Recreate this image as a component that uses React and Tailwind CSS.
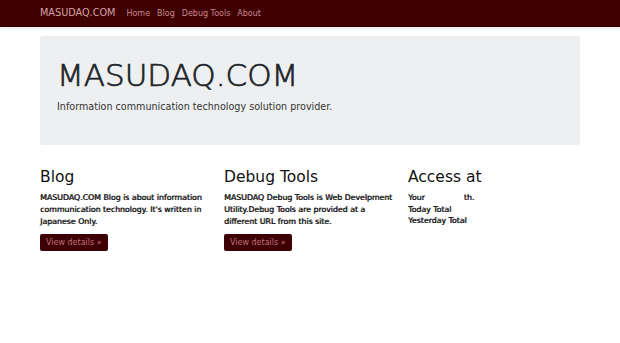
const columns = [
  {
    title: 'Blog',
    body: "MASUDAQ.COM Blog is about information communication technology. It's written in Japanese Only.",
  },
  {
    title: 'Debug Tools',
    body: 'MASUDAQ Debug Tools is Web Develpment Utility.Debug Tools are provided at a different URL from this site.',
  },
]

const App = () => {
  return (
    <div className="min-h-[343px] bg-white font-['DejaVu_Sans',sans-serif] text-[#212529]">
      {/* Navbar */}
      <nav className="h-[27px] bg-[#3f0000] shadow-[0_2px_3px_rgba(180,200,210,0.35)]">
        <div className="mx-auto flex h-full w-[540px] items-center">
          <span className="mr-[11px] text-[9.7px] text-[#d6a3a8]">MASUDAQ.COM</span>
          <ul className="flex items-center gap-[7px] text-[8px] text-[#c98990]">
            <li>Home</li>
            <li>Blog</li>
            <li>Debug Tools</li>
            <li>About</li>
          </ul>
        </div>
      </nav>

      <main className="mx-auto w-[540px] pt-[9px]">
        {/* Jumbotron */}
        <div className="h-[109px] rounded-[3px] bg-[#eeeff1] px-[17px] pt-[20px]">
          <h1 className="text-[31px] font-light leading-[38px] text-[#212529] [-webkit-text-stroke:0.7px_#212529]">MASUDAQ.COM</h1>
          <p className="mt-[6px] text-[9.6px] text-[#333]">Information communication technology solution provider.</p>
        </div>

        {/* Columns */}
        <div className="mt-[22px] grid grid-cols-3 gap-x-[12px]">
          {columns.map((col) => (
            <div key={col.title}>
              <h2 className="text-[15.5px] leading-[20px] text-[#111]">{col.title}</h2>
              <p className="mt-[5px] text-[7.8px] leading-[12px] text-[#1a1a1a] [text-shadow:0.55px_0_0_currentColor]">{col.body}</p>
              <button className="mt-[6px] rounded-[2px] bg-[#3d0004] px-[6px] py-[3px] text-[8px] leading-[11px] text-[#c0707a]">
                View details »
              </button>
            </div>
          ))}
          <div>
            <h2 className="text-[15.5px] leading-[20px] text-[#111]">Access at</h2>
            <div className="mt-[5px] text-[7.8px] leading-[11.5px] text-[#1a1a1a] [text-shadow:0.55px_0_0_currentColor]">
              <p>
                Your<span className="inline-block w-[39px]"></span>th.
              </p>
              <p>Today Total</p>
              <p>Yesterday Total</p>
            </div>
          </div>
        </div>
      </main>
    </div>
  )
}

export default App
